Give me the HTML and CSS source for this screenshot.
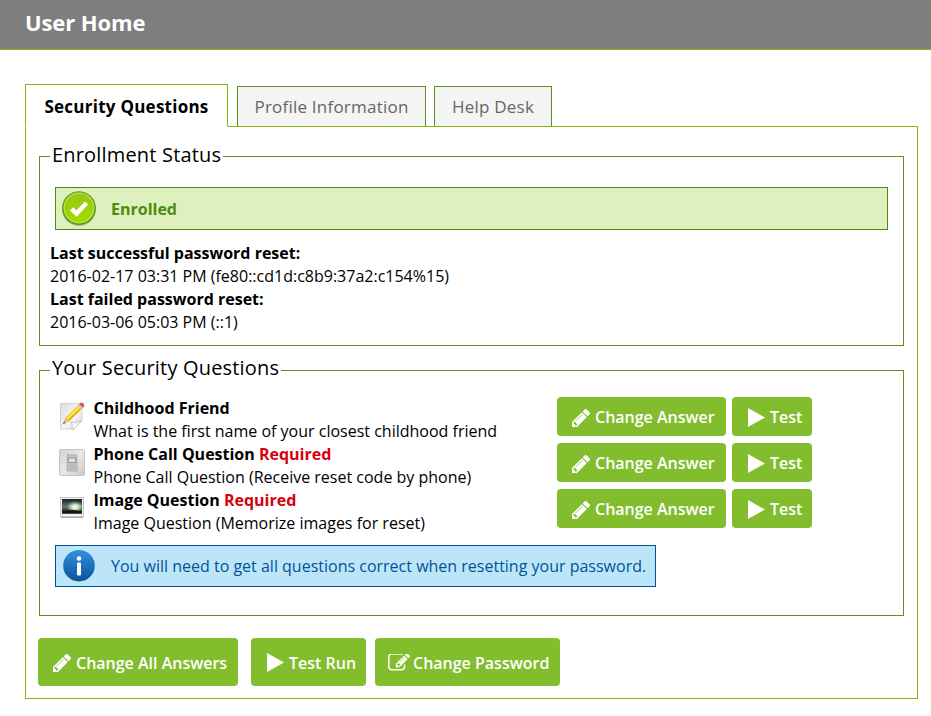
FILE: index.html
```html
<!DOCTYPE html>
<html lang="en">
<head>
<meta charset="utf-8">
<title>User Home</title>
<link rel="stylesheet" href="styles.css">
</head>
<body>
<svg class="defs" aria-hidden="true">
  <symbol id="pencil" viewBox="0 149 1515 1515"><path d="M363 1536l91-91-235-235-91 91v107h128v128h107zM886 608q0-22-22-22-10 0-17 7l-542 542q-7 7-7 17 0 22 22 22 10 0 17-7l542-542q7-7 7-17zM832 416l416 416-832 832h-416v-416zM1515 512q0 53-37 90l-166 166-416-416 166-165q36-38 90-38 53 0 91 38l235 234q37 39 37 91z"/></symbol>
  <symbol id="play" viewBox="0 0 17 19"><path d="M0 0L17 9.500L0 19z"/></symbol>
  <symbol id="edit" viewBox="0 220 1792 1330"><path d="M888 1184l116-116-152-152-116 116v56h96v96h56zm440-720q-16-16-33 1l-350 350q-17 17-1 33t33-1l350-350q17-17 1-33zm80 594v190q0 119-84.500 203.500t-203.500 84.500h-832q-119 0-203.500-84.500t-84.500-203.500v-832q0-119 84.500-203.500t203.500-84.500h832q63 0 117 25 15 7 18 23 3 17-9 29l-49 49q-14 14-32 8-23-6-45-6h-832q-66 0-113 47t-47 113v832q0 66 47 113t113 47h832q66 0 113-47t47-113v-126q0-13 9-22l64-64q15-15 35-7t20 29zm-96-738l288 288-672 672h-288v-288zm444 132l-92 92-288-288 92-92q28-28 68-28t68 28l152 152q28 28 28 68t-28 68z"/></symbol>
</svg>
<header class="header"><h1>User Home</h1></header>
<main class="main">
  <nav class="tabs">
    <a class="tab active">Security Questions</a>
    <a class="tab profile">Profile Information</a>
    <a class="tab help">Help Desk</a>
  </nav>
  <div class="panel">
    <fieldset class="status">
      <legend>Enrollment Status</legend>
      <div class="notice success">
        <svg class="badge" viewBox="0 0 36 36">
          <defs>
            <linearGradient id="rim" x2="0" y2="1"><stop stop-color="#6da51b"/><stop offset="1" stop-color="#4c8708"/></linearGradient>
            <linearGradient id="lime" x2="0" y2="1"><stop stop-color="#94c813"/><stop offset="1" stop-color="#a2dc00"/></linearGradient>
          </defs>
          <ellipse cx="18" cy="18.500" rx="17" ry="16.500" fill="#8ea773" opacity=".7"/>
          <circle cx="18" cy="17" r="16.800" fill="url(#rim)"/>
          <circle cx="18" cy="17" r="14.900" fill="url(#lime)" stroke="#b9e54b" stroke-width="1.200"/>
          <path d="M10.500 18l5 4.500L25.500 12" fill="none" stroke="#fff" stroke-width="4.500"/>
        </svg>
        <strong>Enrolled</strong>
      </div>
      <dl class="resets">
        <dt>Last successful password reset:</dt>
        <dd>2016-02-17 03:31 PM (fe80::cd1d:c8b9:37a2:c154%15)</dd>
        <dt>Last failed password reset:</dt>
        <dd>2016-03-06 05:03 PM (::1)</dd>
      </dl>
    </fieldset>
    <fieldset class="questions">
      <legend>Your Security Questions</legend>
      <div class="row">
        <svg class="kind" viewBox="0 0 28 30">
          <defs><linearGradient id="paper" x2="1" y2="1"><stop stop-color="#dedede"/><stop offset=".6" stop-color="#f5f5f5"/><stop offset="1" stop-color="#ccc"/></linearGradient></defs>
          <path d="M2.500 3.500H24V21L16 29H2.500z" fill="url(#paper)" stroke="#d4d4d4"/>
          <path d="M14 29q1-4-1-7 5 2 11-1l-8 8z" fill="#fafafa" stroke="#bbb" stroke-width=".8"/>
          <path d="M5.500 23.500l2.200-6L21 4.500l3.700 3.500L11.500 21z" fill="#f3c719"/>
          <path d="M9 19L22.500 5.800" stroke="#fff06a" stroke-width="1.500"/>
          <path d="M10.500 20.500L24 7.400" stroke="#d59a17"/>
          <path d="M5 24l2.700-6.500 3.800 3.500z" fill="#dfbd86"/><path d="M5 24l1-2.500 1.500 1.500z" fill="#555"/>
          <path d="M19.500 5.500l1.500-1.500 4 4-1.500 1.500z" fill="#c9cac7"/><path d="M21 4q3-3 5 0 1 2-1 4z" fill="#e3555b"/>
        </svg>
        <div class="text"><strong>Childhood Friend</strong><span>What is the first name of your closest childhood friend</span></div>
        <button class="btn change"><svg class="pen"><use href="#pencil"/></svg><span>Change Answer</span></button>
        <button class="btn test"><svg class="play"><use href="#play"/></svg><span>Test</span></button>
      </div>
      <div class="row">
        <svg class="kind" viewBox="0 0 28 30">
          <defs><linearGradient id="tile" x2="1" y2="1"><stop stop-color="#d2d2d2"/><stop offset=".5" stop-color="#e7e7e7"/><stop offset="1" stop-color="#c9c9c9"/></linearGradient></defs>
          <rect x="1.500" y="3.500" width="25" height="26" rx="1" fill="url(#tile)" stroke="#c6c6c6"/>
          <path d="M10 9V7.500" stroke="#aaa" stroke-width="1.500"/>
          <rect x="9" y="9" width="10" height="16" rx="1" fill="#c3c3c3" stroke="#b0b0b0"/>
          <rect x="10.500" y="12" width="7" height="4.500" fill="#dedede" stroke="#999"/>
          <path d="M10.500 19.500h7M10.500 22h7" stroke="#b0b0b0"/>
        </svg>
        <div class="text"><strong>Phone Call Question <em>Required</em></strong><span>Phone Call Question (Receive reset code by phone)</span></div>
        <button class="btn change"><svg class="pen"><use href="#pencil"/></svg><span>Change Answer</span></button>
        <button class="btn test"><svg class="play"><use href="#play"/></svg><span>Test</span></button>
      </div>
      <div class="row">
        <svg class="kind" viewBox="0 0 28 30">
          <defs>
            <linearGradient id="sky" x2="0" y2="1"><stop stop-color="#152127"/><stop offset=".55" stop-color="#607a75"/><stop offset=".72" stop-color="#35463b"/><stop offset="1" stop-color="#071008"/></linearGradient>
            <radialGradient id="sun"><stop stop-color="#fff"/><stop offset=".35" stop-color="#dce6cd"/><stop offset="1" stop-color="#a8b9a1" stop-opacity="0"/></radialGradient>
          </defs>
          <path d="M3 23h22v3H3z" fill="#aaa"/>
          <rect x="2.500" y="5.500" width="23" height="19" fill="#f2f2f2" stroke="#c8c8c8"/>
          <rect x="4" y="7" width="20" height="14.500" fill="url(#sky)"/>
          <ellipse cx="17" cy="15" rx="9" ry="6" fill="url(#sun)"/>
          <path d="M4 19.500q10-3 20 0v2H4z" fill="#0d190e"/>
        </svg>
        <div class="text"><strong>Image Question <em>Required</em></strong><span>Image Question (Memorize images for reset)</span></div>
        <button class="btn change"><svg class="pen"><use href="#pencil"/></svg><span>Change Answer</span></button>
        <button class="btn test"><svg class="play"><use href="#play"/></svg><span>Test</span></button>
      </div>
      <div class="notice info">
        <svg class="badge" viewBox="0 0 36 36">
          <defs><linearGradient id="blue" x2="0" y2="1"><stop stop-color="#3291df"/><stop offset="1" stop-color="#0b5298"/></linearGradient></defs>
          <circle cx="18" cy="17.700" r="15.800" fill="url(#blue)"/>
          <circle cx="18" cy="10.500" r="2.300" fill="#fff"/>
          <rect x="16" y="14.500" width="4" height="13" rx="1" fill="#fff"/>
        </svg>
        <span>You will need to get all questions correct when resetting your password.</span>
      </div>
    </fieldset>
    <div class="actions">
      <button class="btn all"><svg class="pen"><use href="#pencil"/></svg><span>Change All Answers</span></button>
      <button class="btn run"><svg class="play"><use href="#play"/></svg><span>Test Run</span></button>
      <button class="btn password"><svg class="edit"><use href="#edit"/></svg><span>Change Password</span></button>
    </div>
  </div>
</main>
</body>
</html>
```
FILE: styles.css
```css
* { box-sizing: border-box; }
body {
  margin: 0;
  background: #fff;
  color: #000;
  font: 16px/23px "Open Sans", sans-serif;
}
.defs { display: none; }
svg { flex: none; }
.header {
  height: 50px;
  padding: 7px 25px 0;
  background: #7e7e7e;
  border-bottom: 1px solid #82b90d;
}
h1 { margin: 0; color: #fff; font-size: 22px; line-height: 30px; letter-spacing: -.1px; }
.main { padding: 34px 13px 0 25px; }
.tabs { display: flex; align-items: flex-end; height: 43px; }
.tab {
  border: 1px solid #5f9019;
  border-bottom: 0;
  background: #f4f4f4;
  color: #666;
  font-size: 17px;
  line-height: 40px;
  letter-spacing: .22px;
  text-align: center;
  white-space: nowrap;
}
.tab.profile { width: 189px; margin: 0 8px 1px 9px; height: 40px; }
.tab.help { width: 118px; margin-bottom: 1px; height: 40px; }
.tab.active {
  position: relative;
  width: 203px;
  height: 43px;
  border: 1px solid #82b90d;
  border-bottom-color: #fff;
  background: #fff;
  color: #000;
  font-weight: 700;
  line-height: 44px;
  letter-spacing: .25px;
}
.panel {
  height: 573px;
  margin-top: -1px;
  padding: 16px 13px 0;
  border: 1px solid #82b90d;
}
fieldset { min-width: 0; margin: 0; border: 1px solid #5f9019; }
legend {
  height: 27px;
  padding: 0 2px;
  font-size: 20px;
  line-height: 24px;
  letter-spacing: .18px;
  white-space: nowrap;
}
.questions legend { line-height: 22px; }
.status { height: 203px; padding: 17px 15px 0 10px; }
.questions { height: 259px; margin-top: 11px; padding: 13px 15px 0 10px; }
.notice { display: flex; align-items: center; border: 1px solid; white-space: nowrap; }
.badge { width: 36px; height: 36px; margin: 0 14px 0 5px; }
.success { height: 43px; margin-left: 5px; border-color: #4f8a10; background: #dff0bf; color: #4f8a10; }
.success strong { margin-top: 2px; }
.info { width: 601px; height: 42px; margin: 10px 0 0 5px; border-color: #00529b; background: #bde5f8; color: #00529b; }
.resets { margin: 12px 0 0; }
dt { font-weight: 700; }
dd { margin: 0; }
.row { display: grid; grid-template-columns: 28px 479px 169px 80px; height: 46px; }
.row .kind { width: 28px; height: 30px; margin: 3px 0 0 8px; }
.row .text { display: flex; flex-direction: column; padding-left: 15.500px; white-space: nowrap; }
em { color: #d8000c; font-style: normal; }
.btn {
  display: flex;
  align-items: center;
  height: 39px;
  margin: 0;
  padding: 0;
  border: 0;
  border-radius: 4px;
  background: #82bd2e;
  color: #fff;
  fill: #fff;
  font: 600 16px/23px "Open Sans", sans-serif;
  white-space: nowrap;
}
.btn span { margin-top: 2px; }
.pen { width: 18px; height: 18px; margin: 2px 5px 0 15px; }
.play { width: 17px; height: 19px; margin: 1px 5px 0 16px; }
.edit { width: 22px; height: 17px; margin: 0 3px 0 13px; }
.test { width: 80px; margin-left: 6px; }
.actions { display: flex; margin: 22px 0 0 -1px; }
.actions .btn { height: 48px; }
.all { width: 200px; margin-right: 13px; }
.run { width: 115px; margin-right: 9px; }
.password { width: 185px; }
```
